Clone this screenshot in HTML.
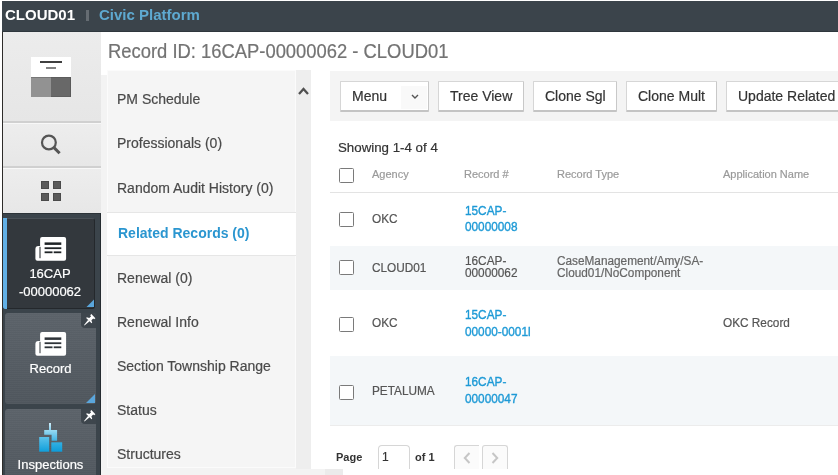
<!DOCTYPE html><html><head><meta charset="utf-8"><style>
html,body{margin:0;padding:0;}
body{width:838px;height:475px;overflow:hidden;position:relative;background:#fff;font-family:"Liberation Sans",sans-serif;}
.t{position:absolute;white-space:nowrap;line-height:normal;will-change:transform;-webkit-text-stroke:0.2px currentColor;}
.r{position:absolute;box-sizing:border-box;}
.btn{position:absolute;top:81px;height:31px;box-sizing:border-box;background:#fff;border:1px solid #d6d6d6;border-right-color:#c8c8c8;border-bottom:2px solid #c4c4c4;border-radius:1px;}
.cb{position:absolute;width:15px;height:15px;box-sizing:border-box;border:1.6px solid #7a7a7a;background:#fff;border-radius:1.5px;}
</style></head><body>
<div class="r" style="left:2px;top:1px;width:1px;height:474px;background:#2e2c2a"></div>
<div class="r" style="left:2px;top:1px;width:836px;height:31px;background:#3b444b;border-bottom:1px solid #2f373d"></div>
<div class="t" style="left:5.2px;top:7px;font-size:15px;color:#fff;font-weight:bold;transform:translateY(-0.6px);-webkit-text-stroke:0;">CLOUD01</div>
<div class="r" style="left:86px;top:10px;width:3px;height:11px;background:#656c72"></div>
<div class="t" style="left:98.5px;top:7px;font-size:15px;color:#5ea9d0;font-weight:bold;transform:translateY(-0.6px);-webkit-text-stroke:0;">Civic Platform</div>
<div class="r" style="left:3px;top:32px;width:98px;height:91px;background:linear-gradient(#ececec,#e6e6e6);border-bottom:2px solid #d0d0d0"></div>
<div class="r" style="left:3px;top:123px;width:98px;height:45px;background:linear-gradient(#ededed,#e7e7e7);border-top:1px solid #f8f8f8;border-bottom:2px solid #d0d0d0"></div>
<div class="r" style="left:3px;top:168px;width:98px;height:45px;background:linear-gradient(#ededed,#e7e7e7);border-top:1px solid #f8f8f8"></div>
<div class="r" style="left:31px;top:57px;width:40px;height:20px;background:#fff"></div>
<div class="r" style="left:40px;top:61px;width:22px;height:2px;background:#3f3f3f"></div>
<div class="r" style="left:46px;top:67px;width:10px;height:2px;background:#5a5a5a;transform:scaleY(0.75)"></div>
<div class="r" style="left:31px;top:77px;width:20px;height:20px;background:#929292;border-top:1px solid #777"></div>
<div class="r" style="left:51px;top:77px;width:20px;height:20px;background:#686868;border-top:1px solid #5c5c5c;border-right:1px solid #595959;border-bottom:1px solid #5f5f5f"></div>
<svg width="24" height="24" viewBox="0 0 24 24" style="position:absolute;left:38px;top:132px"><circle cx="10.9" cy="10.5" r="6.9" fill="none" stroke="#555" stroke-width="2.2"/><line x1="16" y1="15.6" x2="21.6" y2="21.2" stroke="#555" stroke-width="3" /></svg><div class="r" style="left:41px;top:181px;width:8px;height:8px;background:#5a5a5a;border:1px solid #4a4a4a"></div>
<div class="r" style="left:41px;top:193px;width:8px;height:8px;background:#5a5a5a;border:1px solid #4a4a4a"></div>
<div class="r" style="left:53px;top:181px;width:8px;height:8px;background:#5a5a5a;border:1px solid #4a4a4a"></div>
<div class="r" style="left:53px;top:193px;width:8px;height:8px;background:#5a5a5a;border:1px solid #4a4a4a"></div>
<div class="r" style="left:3px;top:213px;width:98px;height:262px;background:#3b444b;border-top:1px solid #2d3439;border-right:1.5px solid #252b30"></div>
<div class="r" style="left:3px;top:218px;width:92px;height:91px;background:#33383d;border-radius:0 3px 3px 0;border-top:1px solid #4a5157;border-right:1px solid #24282c;border-bottom:1px solid #24282c"></div>
<div class="r" style="left:3px;top:218px;width:4px;height:91px;background:#62b0e6;border-radius:0 0 0 2px"></div>
<svg width="32" height="26" viewBox="0 0 32 26" style="position:absolute;left:34.5px;top:236.8px">
<path d="M7.1 0 H29.1 A2 2 0 0 1 31.1 2 V21.7 A2 2 0 0 1 29.1 23.7 H2.4 A2 2 0 0 1 0.4 21.7 V11.9 A3 3 0 0 1 3.4 8.9 H5.1 V2 A2 2 0 0 1 7.1 0 Z" fill="#fff"/>
<rect x="4.5" y="9.8" width="1" height="11.4" fill="#1f2326"/>
<rect x="9.6" y="5.4" width="16.7" height="2.5" fill="#1f2326"/>
<rect x="9.6" y="10.3" width="16.7" height="1.8" fill="#1f2326"/>
<rect x="9.6" y="14.4" width="7.9" height="1.8" fill="#1f2326"/>
<rect x="18.7" y="14.4" width="7.6" height="1.8" fill="#1f2326"/>
</svg><div class="t" style="left:3px;width:94px;text-align:center;top:266px;font-size:13px;color:#fff;-webkit-text-stroke:0.2px #fff">16CAP</div><div class="t" style="left:3px;width:94px;text-align:center;top:284px;font-size:13px;color:#fff;-webkit-text-stroke:0.2px #fff">-00000062</div><svg width="9" height="9" style="position:absolute;left:85.5px;top:299px"><path d="M0.5 8 L8 0.5 L8 8 z" fill="#5aa6dc"/></svg><div class="r" style="left:5px;top:313px;width:91px;height:91px;background:repeating-linear-gradient(rgba(255,255,255,0.025) 0 1px,rgba(0,0,0,0) 1px 2px),linear-gradient(#5b6269,#4f565d);border-radius:3px"></div>
<div class="r" style="left:81px;top:313px;width:15px;height:14.5px;background:#3e464d;border-radius:0 3px 0 4px"></div>
<svg width="22" height="22" viewBox="0 0 22 22" style="position:absolute;left:78px;top:308px">
<g transform="rotate(45 10.8 12.7) translate(10.8 6.23)"><path d="M-2.85 0 H2.85 V1.7 H1.5 V4.3 L3.8 5.5 V6.4 H-3.8 V5.5 L-1.5 4.3 V1.7 H-2.85 Z" fill="#fff"/><path d="M-1 6.3 H1 L0.25 12.9 H-0.25 Z" fill="#fff"/></g>
</svg><svg width="32" height="26" viewBox="0 0 32 26" style="position:absolute;left:34.5px;top:331.8px">
<path d="M7.1 0 H29.1 A2 2 0 0 1 31.1 2 V21.7 A2 2 0 0 1 29.1 23.7 H2.4 A2 2 0 0 1 0.4 21.7 V11.9 A3 3 0 0 1 3.4 8.9 H5.1 V2 A2 2 0 0 1 7.1 0 Z" fill="#fff"/>
<rect x="4.5" y="9.8" width="1" height="11.4" fill="#2f3439"/>
<rect x="9.6" y="5.4" width="16.7" height="2.5" fill="#2f3439"/>
<rect x="9.6" y="10.3" width="16.7" height="1.8" fill="#2f3439"/>
<rect x="9.6" y="14.4" width="7.9" height="1.8" fill="#2f3439"/>
<rect x="18.7" y="14.4" width="7.6" height="1.8" fill="#2f3439"/>
</svg><div class="t" style="left:5px;width:91px;text-align:center;top:361px;font-size:13px;color:#fff;-webkit-text-stroke:0.2px #fff">Record</div><svg width="9" height="9" style="position:absolute;left:85.5px;top:394px"><path d="M0 9 L9 0 L9 9 z" fill="#5aa6dc"/></svg><div class="r" style="left:5px;top:409px;width:91px;height:81px;background:repeating-linear-gradient(rgba(255,255,255,0.025) 0 1px,rgba(0,0,0,0) 1px 2px),linear-gradient(#5b6269,#4f565d);border-radius:3px"></div>
<div class="r" style="left:81px;top:409px;width:15px;height:14.5px;background:#3e464d;border-radius:0 3px 0 4px"></div>
<svg width="22" height="22" viewBox="0 0 22 22" style="position:absolute;left:78px;top:404px">
<g transform="rotate(45 10.8 12.7) translate(10.8 6.23)"><path d="M-2.85 0 H2.85 V1.7 H1.5 V4.3 L3.8 5.5 V6.4 H-3.8 V5.5 L-1.5 4.3 V1.7 H-2.85 Z" fill="#fff"/><path d="M-1 6.3 H1 L0.25 12.9 H-0.25 Z" fill="#fff"/></g>
</svg><svg width="26" height="32" style="position:absolute;left:38px;top:422px"><defs>
<linearGradient id="g1" x1="0" y1="0" x2="0" y2="1"><stop offset="0" stop-color="#d0eefa"/><stop offset="1" stop-color="#7fcdee"/></linearGradient>
<linearGradient id="g2" x1="0" y1="0" x2="0" y2="1"><stop offset="0" stop-color="#9adaf2"/><stop offset="1" stop-color="#3fb3e4"/></linearGradient>
<linearGradient id="g3" x1="0" y1="0" x2="0" y2="1"><stop offset="0" stop-color="#5cc2ea"/><stop offset="1" stop-color="#109fdb"/></linearGradient>
<linearGradient id="g4" x1="0" y1="0" x2="0" y2="1"><stop offset="0" stop-color="#32b0e3"/><stop offset="1" stop-color="#0d9bd8"/></linearGradient></defs>
<rect x="11" y="1" width="2" height="7.2" fill="url(#g1)"/><path d="M6.2 8 h12.9 v10.8 h-5.5 v-6 h-7.4 z" fill="url(#g2)"/><rect x="1.2" y="15" width="10" height="14.7" fill="url(#g3)"/><rect x="13.3" y="20.3" width="10.9" height="9.4" fill="url(#g4)"/></svg><div class="t" style="left:5px;width:91px;text-align:center;top:457px;font-size:13px;color:#fff;-webkit-text-stroke:0.2px #fff">Inspections</div><div class="t" style="left:108px;top:41px;font-size:18.4px;color:#737373;font-weight:normal;transform:scaleY(1.09);transform-origin:0 17px;">Record ID: 16CAP-00000062 - CLOUD01</div>
<div class="r" style="left:101px;top:75px;width:242px;height:400px;background:#f3f3f3"></div>
<div class="r" style="left:325px;top:469px;width:18px;height:6px;background:#ebebeb"></div>
<div class="r" style="left:107px;top:70px;width:189px;height:398px;background:#f5f5f5;border:1px solid #fbfbfb"></div>
<div class="r" style="left:296px;top:70px;width:15px;height:399px;background:#eeeeee"></div>
<svg width="14" height="10" style="position:absolute;left:297px;top:85px"><path d="M2 9 L6.5 4 L11 9" fill="none" stroke="#505050" stroke-width="2.3"/></svg><div class="t" style="left:117px;top:91px;font-size:14px;color:#4a4a4a;font-weight:normal;">PM Schedule</div>
<div class="t" style="left:117px;top:135px;font-size:14px;color:#4a4a4a;font-weight:normal;">Professionals (0)</div>
<div class="t" style="left:117px;top:180px;font-size:14px;color:#4a4a4a;font-weight:normal;">Random Audit History (0)</div>
<div class="r" style="left:107px;top:212px;width:189px;height:44px;background:#fff;border-top:1px solid #e6e6e6;border-bottom:1px solid #e6e6e6"></div>
<div class="t" style="left:118px;top:225px;font-size:14px;color:#2b96d0;font-weight:bold;-webkit-text-stroke:0;">Related Records (0)</div>
<div class="t" style="left:117px;top:270px;font-size:14px;color:#4a4a4a;font-weight:normal;">Renewal (0)</div>
<div class="t" style="left:117px;top:314px;font-size:14px;color:#4a4a4a;font-weight:normal;">Renewal Info</div>
<div class="t" style="left:117px;top:358px;font-size:14px;color:#4a4a4a;font-weight:normal;">Section Township Range</div>
<div class="t" style="left:117px;top:402px;font-size:14px;color:#4a4a4a;font-weight:normal;">Status</div>
<div class="t" style="left:117px;top:446px;font-size:14px;color:#4a4a4a;font-weight:normal;">Structures</div>
<div class="r" style="left:311px;top:70px;width:527px;height:399px;background:#fff"></div>
<div class="r" style="left:330px;top:71px;width:508px;height:50px;background:#f4f4f4"></div>
<div class="btn" style="left:340px;width:89px"></div><div class="t" style="left:352px;top:88px;font-size:14px;color:#333;font-weight:normal;">Menu</div>
<div class="btn" style="left:438px;width:86px"></div><div class="t" style="left:450px;top:88px;font-size:14px;color:#333;font-weight:normal;">Tree View</div>
<div class="btn" style="left:533px;width:84px"></div><div class="t" style="left:545px;top:88px;font-size:14px;color:#333;font-weight:normal;">Clone Sgl</div>
<div class="btn" style="left:626px;width:91px"></div><div class="t" style="left:638px;top:88px;font-size:14px;color:#333;font-weight:normal;">Clone Mult</div>
<div class="btn" style="left:726px;width:134px"></div><div class="t" style="left:738px;top:88px;font-size:14px;color:#333;font-weight:normal;">Update Related</div>
<div class="r" style="left:401px;top:86px;width:26px;height:23px;background:#f9f9f9"></div>
<svg width="10" height="8" style="position:absolute;left:409.5px;top:93px"><path d="M2 2 L5 5 L8 2" fill="none" stroke="#555" stroke-width="1.4"/></svg><div class="t" style="left:338px;top:140px;font-size:13.3px;color:#333;font-weight:normal;">Showing 1-4 of 4</div>
<div class="cb" style="left:339px;top:168px"></div><div class="t" style="left:372px;top:168px;font-size:11px;color:#9a9a9a;font-weight:normal;">Agency</div>
<div class="t" style="left:464px;top:168px;font-size:11px;color:#9a9a9a;font-weight:normal;">Record #</div>
<div class="t" style="left:557px;top:168px;font-size:11px;color:#9a9a9a;font-weight:normal;">Record Type</div>
<div class="t" style="left:723px;top:168px;font-size:11px;color:#9a9a9a;font-weight:normal;">Application Name</div>
<div class="r" style="left:330px;top:192px;width:508px;height:1px;background:#e3e3e3"></div>
<div class="r" style="left:330px;top:246px;width:508px;height:44px;background:#f4f7f9"></div>
<div class="r" style="left:330px;top:356px;width:508px;height:70px;background:#f4f7f9;border-bottom:1px solid #ececec"></div>
<div class="cb" style="left:339px;top:212px"></div><div class="t" style="left:372px;top:212px;font-size:11.8px;color:#555;font-weight:normal;transform:scaleY(1.06);transform-origin:0 11px;">OKC</div>
<div class="t" style="left:465px;top:204px;font-size:11.8px;color:#1e9ad6;font-weight:normal;transform:scaleY(1.1);transform-origin:0 11px;-webkit-text-stroke:0.35px #1e9ad6;">15CAP-</div>
<div class="t" style="left:465px;top:220px;font-size:11.8px;color:#1e9ad6;font-weight:normal;transform:scaleY(1.1);transform-origin:0 11px;-webkit-text-stroke:0.35px #1e9ad6;">00000008</div>
<div class="cb" style="left:339px;top:260px"></div><div class="t" style="left:372px;top:261px;font-size:11.8px;color:#555;font-weight:normal;transform:scaleY(1.06);transform-origin:0 11px;">CLOUD01</div>
<div class="t" style="left:465px;top:254px;font-size:11.8px;color:#555;font-weight:normal;transform:scaleY(1.06);transform-origin:0 11px;">16CAP-</div>
<div class="t" style="left:465px;top:266px;font-size:11.8px;color:#555;font-weight:normal;transform:scaleY(1.06);transform-origin:0 11px;">00000062</div>
<div class="t" style="left:557px;top:254px;font-size:11.8px;color:#666;font-weight:normal;transform:scaleY(1.06);transform-origin:0 11px;">CaseManagement/Amy/SA-</div>
<div class="t" style="left:557px;top:266px;font-size:11.8px;color:#666;font-weight:normal;transform:scaleY(1.06);transform-origin:0 11px;">Cloud01/NoComponent</div>
<div class="cb" style="left:339px;top:317px"></div><div class="t" style="left:372px;top:316px;font-size:11.8px;color:#555;font-weight:normal;transform:scaleY(1.06);transform-origin:0 11px;">OKC</div>
<div class="t" style="left:465px;top:308px;font-size:11.8px;color:#1e9ad6;font-weight:normal;transform:scaleY(1.1);transform-origin:0 11px;-webkit-text-stroke:0.35px #1e9ad6;">15CAP-</div>
<div class="t" style="left:465px;top:325px;font-size:11.8px;color:#1e9ad6;font-weight:normal;transform:scaleY(1.1);transform-origin:0 11px;-webkit-text-stroke:0.35px #1e9ad6;">00000-0001l</div>
<div class="t" style="left:723px;top:316px;font-size:11.8px;color:#555;font-weight:normal;transform:scaleY(1.06);transform-origin:0 11px;">OKC Record</div>
<div class="cb" style="left:339px;top:385px"></div><div class="t" style="left:372px;top:384px;font-size:11.8px;color:#555;font-weight:normal;transform:scaleY(1.06);transform-origin:0 11px;">PETALUMA</div>
<div class="t" style="left:465px;top:375px;font-size:11.8px;color:#1e9ad6;font-weight:normal;transform:scaleY(1.1);transform-origin:0 11px;-webkit-text-stroke:0.35px #1e9ad6;">16CAP-</div>
<div class="t" style="left:465px;top:392px;font-size:11.8px;color:#1e9ad6;font-weight:normal;transform:scaleY(1.1);transform-origin:0 11px;-webkit-text-stroke:0.35px #1e9ad6;">00000047</div>
<div class="t" style="left:336px;top:451px;font-size:11px;color:#333;font-weight:bold;-webkit-text-stroke:0;">Page</div>
<div class="r" style="left:378px;top:445px;width:32px;height:24px;background:#fff;border:1px solid #d6d6d6;border-bottom:none;border-radius:4px 4px 0 0"></div>
<div class="t" style="left:382px;top:450px;font-size:12px;color:#333;font-weight:normal;">1</div>
<div class="t" style="left:415px;top:451px;font-size:11px;color:#333;font-weight:bold;-webkit-text-stroke:0;">of 1</div>
<div class="r" style="left:454px;top:445px;width:25px;height:24px;background:#fbfbfb;border:1.5px solid #d6d6d6;border-right:none;border-bottom:none;border-radius:3px 0 0 0"></div>
<div class="r" style="left:482px;top:445px;width:26px;height:24px;background:#fbfbfb;border:1.5px solid #d6d6d6;border-bottom:none;border-radius:3px 3px 0 0"></div>
<svg width="10" height="12" style="position:absolute;left:462px;top:452px"><path d="M7.5 1 L2.8 6 L7.5 11" fill="none" stroke="#c6c6c6" stroke-width="2"/></svg><svg width="10" height="12" style="position:absolute;left:490px;top:452px"><path d="M2.5 1 L7.2 6 L2.5 11" fill="none" stroke="#c6c6c6" stroke-width="2"/></svg></body></html>
